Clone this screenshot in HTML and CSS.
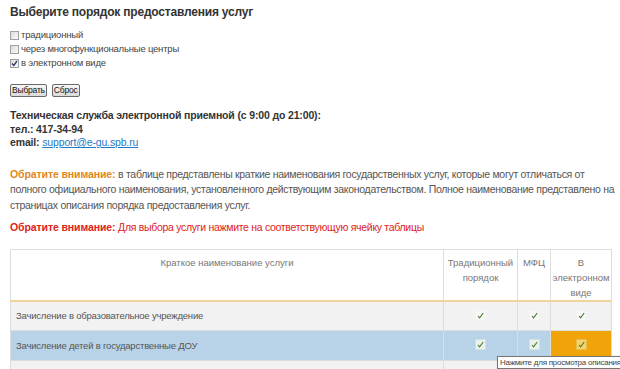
FILE: index.html
```html
<!DOCTYPE HTML>
<html>
<head>
<meta charset="utf-8">
<title>Выбор порядка предоставления услуг</title>
<link rel="stylesheet" href="styles.css">
</head>
<body>
<div class="page">
<h1>Выберите порядок предоставления услуг</h1>
<form class="filter">
<ul>
<li><input type="checkbox" id="trad"><label for="trad">традиционный</label></li>
<li><input type="checkbox" id="mfc"><label for="mfc">через многофункциональные центры</label></li>
<li><input type="checkbox" id="el" checked><label for="el">в электронном виде</label></li>
</ul>
<div class="buttons">
<button type="button">Выбрать</button>
<button type="reset">Сброс</button>
</div>
</form>

<div class="support">
Техническая служба электронной приемной (с 9:00 до 21:00):<br>
тел.: 417-34-94<br>
email: <a href="#">support@e-gu.spb.ru</a>
</div>

<p class="note"><b>Обратите внимание:</b> в таблице представлены краткие наименования государственных услуг, которые могут отличаться от полного официального наименования, установленного действующим законодательством. Полное наименование представлено на страницах описания порядка предоставления услуг.</p>

<p class="warn"><b>Обратите внимание:</b> Для выбора услуги нажмите на соответствующую ячейку таблицы</p>

<table class="services">
<tr>
<th class="name">Краткое наименование услуги</th>
<th class="c1">Традиционный порядок</th>
<th class="c2">МФЦ</th>
<th class="c3">В электронном виде</th>
</tr>
<tr>
<td class="name">Зачисление в образовательное учреждение</td>
<td><span class="tick"></span></td>
<td><span class="tick"></span></td>
<td><span class="tick"></span></td>
</tr>
<tr class="hover">
<td class="name">Зачисление детей в государственные ДОУ</td>
<td><span class="tick"></span></td>
<td><span class="tick"></span></td>
<td class="active"><span class="tick"></span></td>
</tr>
<tr>
<td class="name">&nbsp;</td>
<td></td>
<td></td>
<td></td>
</tr>
</table>
<div class="tooltip">Нажмите для просмотра описания</div>
</div>
</body>
</html>
```

FILE: styles.css
```css
html, body {
	height: 369px;
	overflow: hidden;
}

body {
	margin: 0;
	font-family: "Liberation Sans", Arial, sans-serif;
	color: #333;
	background: #fff;
}

.page {
	position: relative;
	padding: 5px 0 0 10px;
}

h1 {
	font-size: 12px;
	letter-spacing: -0.2px;
	margin: 0 0 8px 0;
	line-height: 15px;
	color: #333;
}

.filter ul {
	list-style: none;
	margin: 0;
	padding: 0;
}

.filter li {
	height: 14px;
	font-size: 9.5px;
	letter-spacing: -0.2px;
	line-height: 14px;
	display: flex;
	align-items: center;
	color: #444;
}

.filter input[type=checkbox] {
	appearance: none;
	-webkit-appearance: none;
	width: 9px;
	height: 9px;
	margin: 0 2px 0 0;
	border: 1px solid #a0a0a0;
	background: linear-gradient(135deg, #dcdcdc, #fafafa);
	border-radius: 0;
}

.filter input[type=checkbox]:checked {
	background: no-repeat center / 7px 7px url("data:image/svg+xml,%3Csvg xmlns='http://www.w3.org/2000/svg' viewBox='0 0 7 7'%3E%3Cpath d='M1 3.5 L2.8 5.5 L6 1' fill='none' stroke='%23303a60' stroke-width='1.3'/%3E%3C/svg%3E"), linear-gradient(135deg, #dcdcdc, #fafafa);
}

.buttons {
	margin-top: 14px;
	display: flex;
	gap: 5px;
}

.buttons button {
	font-family: "Liberation Sans", Arial, sans-serif;
	font-size: 8.5px;
	letter-spacing: -0.2px;
	padding: 0 1px;
	height: 13px;
	line-height: 11px;
	border: 1px solid #6a6a6a;
	border-radius: 2px;
	background: linear-gradient(#f8f8f8, #dadada);
	color: #111;
}

.support {
	margin-top: 12px;
	font-size: 10.5px;
	letter-spacing: -0.15px;
	font-weight: bold;
	line-height: 13.5px;
	color: #333;
}

.support a {
	font-weight: normal;
	color: #1f78c8;
}

.note {
	margin: 17px 0 0 0;
	font-size: 10.5px;
	line-height: 15.5px;
	color: #555;
	letter-spacing: -0.3px;
	width: 605px;
}

.note b {
	color: #e0871e;
	letter-spacing: -0.1px;
}

.warn {
	margin: 7px 0 0 0;
	font-size: 10.5px;
	line-height: 15.5px;
	color: #e0221a;
	letter-spacing: -0.3px;
}

.warn b {
	letter-spacing: -0.1px;
}

.services {
	margin-top: 13px;
	width: 602px;
	border-collapse: collapse;
	font-size: 9.5px;
	color: #555;
}

.services th {
	font-weight: normal;
	color: #777;
	background: #fff;
	border: 1px solid #ddd;
	border-bottom: 2px solid #f2d49a;
	vertical-align: top;
	padding: 5px 1px 0;
	line-height: 15px;
	height: 45px;
}

.services th.c1 { width: 71px; }
.services th.c2 { width: 30px; }
.services th.c3 { width: 58px; }

.services td {
	border: 1px solid #ddd;
	background: #f2f2f2;
	height: 28px;
	padding: 0;
	text-align: center;
	vertical-align: middle;
	letter-spacing: -0.2px;
}

.services td.name {
	text-align: left;
	padding-left: 5px;
}

.services tr.hover td {
	background: #b8d3e7;
	height: 29px;
}

.services tr.hover td.active {
	background: #f0a40a;
}

.tick {
	display: inline-block;
	width: 9px;
	height: 9px;
	margin-top: 1px;
	background: no-repeat center / 9px 9px url("data:image/svg+xml,%3Csvg xmlns='http://www.w3.org/2000/svg' viewBox='0 0 9 9'%3E%3Cpath d='M2 5 L3.6 6.8 L7.2 2' fill='none' stroke='%23467a28' stroke-width='1.1'/%3E%3C/svg%3E"), #f8f8f8;
}

.hover .tick {
	background-color: #e9f3ec;
	outline: 1px solid #d3e3dc;
}

.active .tick {
	background-color: #f6d36a;
	outline: 1px solid #e6bd4a;
}

.tooltip {
	position: absolute;
	left: 497px;
	top: 356px;
	font-size: 8px;
	letter-spacing: -0.25px;
	line-height: 11px;
	padding: 0 2px;
	background: #fff;
	border: 1px solid #767676;
	color: #444;
	white-space: nowrap;
	box-shadow: 1px 1px 2px rgba(0,0,0,0.3);
}
```
